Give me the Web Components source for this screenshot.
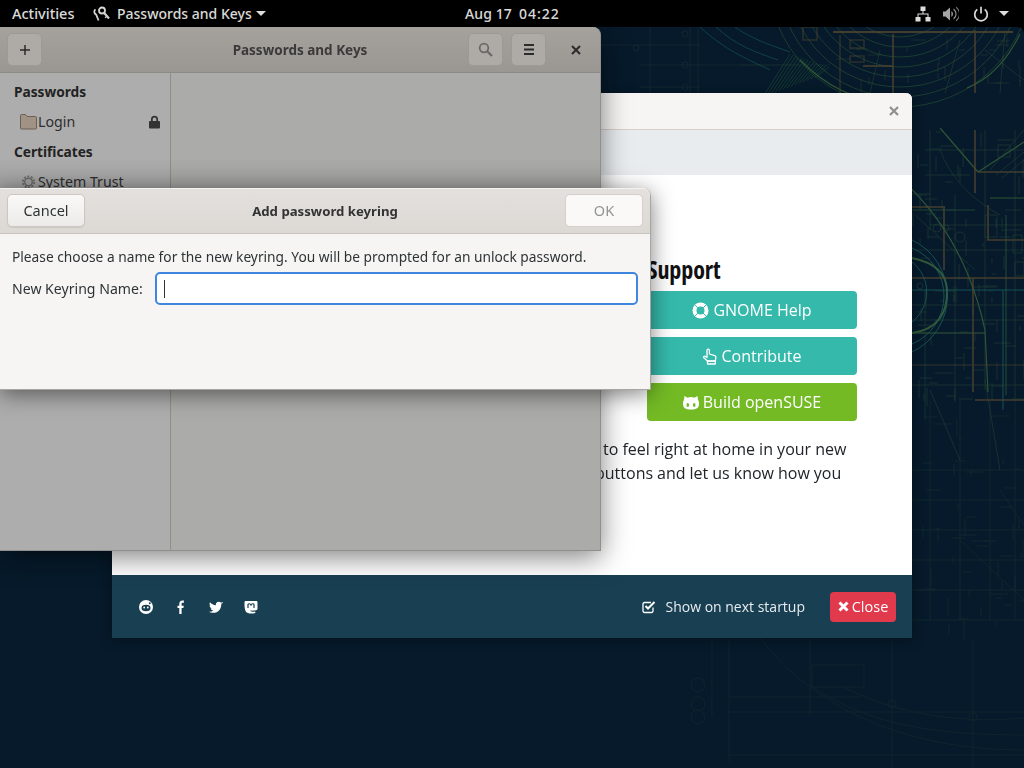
<!DOCTYPE html>
<html lang="en"><head><meta charset="utf-8"><title>Passwords and Keys</title>
<style>html,body{margin:0;padding:0;width:1024px;height:768px;overflow:hidden;background:#061a2b}</style></head>
<body>
<gnome-desktop>
  <blueprint-bg></blueprint-bg>
  <top-bar></top-bar>
  <welcome-window></welcome-window>
  <keys-window></keys-window>
  <keyring-dialog></keyring-dialog>
</gnome-desktop>
<script>
const GF='"Noto Sans","Open Sans",sans-serif', OS='"Open Sans","Noto Sans",sans-serif';
function def(name,css,html){
  customElements.define(name,class extends HTMLElement{
    constructor(){super();const r=this.attachShadow({mode:'open'});r.innerHTML='<style>'+css+'</style>'+html;}
  });
}
/* fine drafting detail for the wallpaper, from a fixed seed */
let seed=17;const rnd=()=>(seed=(seed*16807)%2147483647)/2147483647;
function detail(x0,y0,x1,y1,n,len){let d='';for(let i=0;i<n;i++){const x=Math.round(x0+rnd()*(x1-x0)),y=Math.round(y0+rnd()*(y1-y0)),l=Math.round(4+rnd()*len);d+=rnd()>.5?`M${x} ${y}h${l}`:`M${x} ${y}v${l}`;}return d;}
let arcs='';for(let r=62;r<=132;r+=10)arcs+=`<circle cx="900" cy="-25" r="${r}"/>`;
let hatch='';for(let i=0;i<14;i++)hatch+=`M${763+i*4} ${97-i*1.5}L${790+i*3} ${54+i*1}`;

def('gnome-desktop',`:host{display:block;position:relative;width:1024px;height:768px;overflow:hidden;background:#061a2b}`,`<slot></slot>`);

def('blueprint-bg',`:host{display:block;position:absolute;inset:27px 0 0 0}svg{display:block;filter:blur(.6px)}`,
`<svg width="1024" height="741" viewBox="0 27 1024 741" fill="none">
 <g stroke="#2f5c35" stroke-width=".9" opacity=".6">${arcs}</g>
 <g stroke="#2f6a3a" stroke-width=".7" opacity=".55"><path d="${hatch}"/></g>
 <g stroke="#14544f" stroke-width="1" opacity=".7"><path d="M700 27 C725 50 745 58 770 70M716 27 C735 45 755 52 778 60M735 27 C750 38 770 45 790 52"/></g>
 <g stroke="#3d6a3a" stroke-width="1.200" opacity=".75">
  <path d="M940 128 L978 172"/>
  <path d="M870 155 Q960 215 985 330 L988 392"/>
  <path d="M1020 34 Q1000 75 967 88 "/>
  <path d="M800 60 Q850 110 905 98"/>
  <path d="M978 172 L1024 142"/>
  <path d="M1006 215 V395" opacity=".7"/>
  <path d="M912 210 H975" opacity=".7"/>
  <path d="M990 198 H1024"/>
 </g>
 <g stroke="#4a7a3e" stroke-width="2" opacity=".65"><path d="M912 333 Q948 328 947 290 Q946 265 912 258"/><path d="M912 333 H985" stroke-width="1.200"/></g>
 <g stroke="#1f6a68" stroke-width="1" opacity=".7">
  <path d="M912 352 A62 62 0 0 0 912 240"/><path d="M912 344 A52 52 0 0 0 912 248"/><path d="M912 322 A38 38 0 0 0 912 262"/>
  <path d="M912 290 H1024"/><path d="M1003 290 V410"/>
 </g>
 <g stroke="#5a4a30" stroke-width="1.600" opacity=".75">
  <path d="M975 130 V193"/><path d="M978 172 H1024"/><path d="M912 207 H945"/><path d="M944 207 V270"/>
  <path d="M912 278 H1024"/><path d="M973 278 V392"/><path d="M893 34 V93"/><path d="M975 30 V93"/>
  <path d="M833 32 H1013" stroke-width="2"/><path d="M863 66 H893"/><path d="M840 35 V93" opacity=".6"/><path d="M988 205 V240 H1024"/>
  <path d="M1024 400 H975"/><path d="M912 365 H1024" opacity=".5"/>
  <path d="M803 27 h14 v13 h-14z M850 40 h14 v8 h-14z M850 56 h14 v6 h-14z" opacity=".6"/>
 </g>
 <g stroke="#2d4a3c" stroke-width=".7" opacity=".7">
  <path d="M925 150 H1024M925 175 H970M930 225 H1024M912 250 H1024M912 305 H1024M912 320 H1024M912 385 H1024"/>
  <path d="M930 130 V230M955 195 V400M985 130 V390M1015 130 V400M925 290 V420"/>
  <path d="M990 170 L1024 130M996 175 L1024 152M1002 178 L1024 160M940 150 Q955 190 1000 215"/>
  <path d="M915 215 L975 270M930 390 L960 460M985 380 L1000 470"/>
  <rect x="998" y="145" width="12" height="12"/><rect x="985" y="215" width="12" height="22"/><rect x="1013" y="235" width="9" height="18"/><rect x="1015" y="262" width="9" height="14"/>
  <circle cx="937" cy="228" r="4"/><circle cx="946" cy="228" r="3"/><circle cx="960" cy="237" r="5"/><circle cx="920" cy="286" r="3"/>
  <path d="M1005 30 L1000 93M985 50 L1024 80M960 40 L945 93M880 50 L870 93"/>
  <path d="${detail(912,130,1024,400,90,16)}"/>
 </g>
 <path d="${detail(830,34,1024,93,30,12)}" stroke="#3a5a3a" stroke-width=".6" opacity=".55"/>
 <g stroke="#3b5a3a" stroke-width=".8" opacity=".25">
  <path d="M912 470 H1024M912 500 H1024M912 530 H1024M912 560 H1024M912 590 H1024M912 620 H1024"/>
  <path d="M930 400 V620M960 400 V620M990 400 V620M1015 400 V620"/>
  <path d="M1000 490 L1024 525M960 540 L1024 600"/>
  <path d="${detail(912,400,1024,630,50,16)}"/>
 </g>
 <g stroke="#3b4a3a" stroke-width="1" opacity=".2">
  <path d="M712 639 V716"/><path d="M729 640 V762"/><path d="M729 712 H1024"/><path d="M729 697 H860"/><path d="M729 755 H1024"/><path d="M810 640 V716"/><path d="M892 640 V768"/><path d="M973 640 V768"/>
  <path d="M760 638 C800 690 880 750 1024 750"/><path d="M810 685 C860 720 920 735 1024 735"/><path d="M845 688 C890 710 950 725 1024 718"/>
  <circle cx="698" cy="685" r="7"/><circle cx="698" cy="704" r="7"/><circle cx="698" cy="717" r="7"/>
  <rect x="812" y="665" width="52" height="22"/><circle cx="892" cy="704" r="4"/><circle cx="973" cy="717" r="4"/>
 </g>
 <g stroke="#3b5a3a" stroke-width=".7" opacity=".3">
  <path d="M640 65 H800M640 87 H700M740 65 H830M600 45 H700"/><path d="M690 27 V93M698 27 V93M650 27 V93"/>
  <circle cx="685" cy="34" r="3"/><circle cx="685" cy="65" r="3"/><circle cx="685" cy="87" r="3"/><circle cx="636" cy="48" r="3"/>
 </g>
</svg>`);

def('top-bar',`:host{display:flex;align-items:center;position:absolute;left:0;top:0;width:1024px;height:27px;background:#000;color:#e4e4e2;font:500 14px ${GF};box-sizing:border-box;padding:0 15px 0 12px}
 :host::before,:host::after{content:"";position:absolute;top:27px;width:6px;height:6px;background:radial-gradient(circle at 100% 100%,transparent 5.500px,#000 6px)}
 :host::before{left:0}
 :host::after{right:0;transform:scaleX(-1)}
 .act{width:81px;font-size:14.500px;margin-bottom:2px}.app{display:flex;align-items:center;gap:6px;width:298px}
 .clock{margin-left:74px;display:flex;gap:7px;white-space:pre;letter-spacing:.1px}
 .time{letter-spacing:1px}
 .tray{margin-left:auto;display:flex;align-items:center;gap:12px}
 svg{display:block}`,
`<span class="act">Activities</span>
 <span class="app"><svg width="17" height="16" viewBox="0 0 17 16" fill="none" stroke="#dededc" style="margin-right:1px"><path d="M2.500 3.400A3 3 0 0 0 3.200 8.600L5.600 14.500" stroke-width="1.800"/><circle cx="9" cy="4.500" r="3" stroke-width="1.800"/><path d="M11 6.800L16 12.500" stroke-width="2.200"/><path d="M13.500 10.500l-1.500 1.300" stroke-width="1.400"/></svg>Passwords and Keys<svg width="10" height="5" viewBox="0 0 10 5" fill="#e4e4e2" style="margin-left:-2px"><path d="M0 0h10L5 5z"/></svg></span>
 <span class="clock"><span>Aug 17</span><span class="time">04:22</span></span>
 <span class="tray">
  <svg width="16" height="16" viewBox="0 0 16 16" fill="#dcdcda"><path d="M5.500 0.500h5v4.500h-5zM.5 11h5v4.500h-5zM10.500 11h5v4.500h-5z"/><path d="M7.500 5h1v2.500h5V11h-1V8.500h-9V11h-1V7.500h5z"/></svg>
  <svg width="16" height="16" viewBox="0 0 16 16" fill="#dcdcda"><path d="M0 5.500h2.500L7 1.500v13l-4.500-4H0z" opacity=".75"/><path d="M8.500 5a4 4 0 0 1 0 6z" opacity=".85"/><path d="M10.500 2.500a6.500 6.500 0 0 1 0 11V12a5 5 0 0 0 0-8z" opacity=".7"/><path d="M13 .5a9 9 0 0 1 0 15V14a7.500 7.500 0 0 0 0-12z" opacity=".55"/></svg>
  <span style="display:flex;align-items:center;gap:10px;margin-left:2px"><svg width="16" height="16" viewBox="0 0 16 16" fill="none" stroke="#dcdcda" stroke-width="1.700"><path d="M4.300 3.400a6.300 6.300 0 1 0 7.400 0"/><path d="M8 .8V7.500"/></svg>
  <svg width="10" height="5" viewBox="0 0 10 5" fill="#dcdcda"><path d="M0 0h10L5 5z"/></svg></span>
 </span>`);

def('g-button',`:host{display:inline-flex;align-items:center;justify-content:center;box-sizing:border-box;height:33px;border:1px solid #cdc7c2;border-radius:5px;background:linear-gradient(#faf9f8,#edebe9);color:#2e3436;font:14.500px ${GF};box-shadow:0 1px 1px rgba(0,0,0,.08);padding-bottom:var(--pb,2px)}
 :host([dim]){background:#aeaaa6;border-color:#9d9995;box-shadow:none;color:#333;padding-bottom:0}
 :host([off]){background:#faf9f8;border-color:#d5d0cc;color:#929595;box-shadow:none}`,`<slot></slot>`);

def('link-btn',`:host{display:flex;align-items:center;justify-content:center;gap:var(--g,4px);height:38px;border-radius:4px;background:var(--c,#35b9ab);color:#fff;font:16px ${OS}}
 ::slotted(svg){display:block}`,`<slot></slot>`);

def('welcome-window',`:host{display:flex;flex-direction:column;position:absolute;left:112px;top:93px;width:800px;height:545px;box-shadow:0 2px 12px rgba(0,0,0,.35);border-radius:6px 6px 0 0;overflow:hidden;background:#fff;color:#212529;font:16px ${OS}}
 .tb{height:36px;background:#f6f5f4;border-bottom:1px solid #d5d0cc;display:flex;align-items:center;justify-content:flex-end;padding-right:12px;flex:none}
 .tb svg{display:block}
 .nav{height:45px;background:#e9ecef;flex:none}
 .main{flex:1;padding:79px 55px 0 535px;background:#fff;min-height:0}
 h2{margin:0 0 6px;font:700 24px/31px ${OS};font-stretch:75%;color:#111;letter-spacing:-.1px;height:31px}
 .col{display:flex;flex-direction:column;gap:8px}
 .txt{margin:16px 0 0 -44px;line-height:24px;white-space:nowrap;color:#212529}
 .txt div+div{margin-left:-8px;word-spacing:-.15px}
 .foot{height:63px;background:#193f52;flex:none;display:flex;align-items:center;padding:0 16px 0 27px;color:#e6ecef;font:14px ${OS}}
 .soc{display:flex;gap:21px;align-items:center}.soc svg{display:block}
 .chk{margin-left:auto;display:flex;align-items:center;gap:8px}
 .close{margin-left:25px;width:66px;height:30px;border-radius:4px;background:#e03a4c;color:#fff;display:flex;align-items:center;justify-content:center;gap:3px;font-size:14.500px}`,
`<div class="tb"><svg width="12" height="12" viewBox="0 0 12 12" stroke="#8f8f8f" stroke-width="2.200"><path d="M2 2l8 8M10 2l-8 8"/></svg></div>
 <div class="nav"></div>
 <div class="main">
  <h2>Support</h2>
  <div class="col">
   <link-btn><svg width="17" height="17" viewBox="0 0 17 17"><circle cx="8.500" cy="8.500" r="6" fill="none" stroke="#fff" stroke-width="4"/><path d="M3.200 3.200l2.600 2.600M13.800 3.200l-2.600 2.600M3.200 13.800l2.600-2.600M13.800 13.800l-2.600-2.600" stroke="#35b9ab" stroke-width="1"/></svg>GNOME Help</link-btn>
   <link-btn style="--g:3px"><svg width="16" height="17" viewBox="0 0 16 17" fill="none" stroke="#fff" stroke-width="1.300" stroke-linejoin="round"><path d="M5 9.500V2.300a1.200 1.200 0 0 1 2.400 0V6l5.300 1.600c.9.300 1.300 1 1.200 1.900l-.6 3.500H5.500L1.800 9.800c-.8-1 .6-2.300 1.600-1.400z"/><path d="M5.500 13.200h7.800v2.800H5.500z"/></svg>Contribute</link-btn>
   <link-btn style="--c:#73ba25"><svg width="16" height="15" viewBox="0 0 16 15" fill="#fff"><path d="M1.500 1l3 1.700a10 10 0 0 1 7 0L14.500 1l.5 4c.9 1 1 2.300 1 4 0 4-2.500 5.500-8 5.500S0 13 0 9c0-1.700.1-3 1-4z"/><ellipse cx="4.800" cy="10" rx="1.300" ry="1.900" fill="#73ba25"/><ellipse cx="11.200" cy="10" rx="1.300" ry="1.900" fill="#73ba25"/></svg>Build openSUSE</link-btn>
  </div>
  <div class="txt"><div>to feel right at home in your new</div><div>buttons and let us know how you</div></div>
 </div>
 <div class="foot">
  <div class="soc">
   <svg width="14" height="14" viewBox="0 0 14 14"><circle cx="7" cy="7" r="7" fill="#fff"/><ellipse cx="7" cy="8" rx="4.500" ry="3.200" fill="#193f52"/><circle cx="5.200" cy="7.500" r=".9" fill="#fff"/><circle cx="8.800" cy="7.500" r=".9" fill="#fff"/><circle cx="10.800" cy="3.200" r="1" fill="#193f52"/></svg>
   <svg width="14" height="14" viewBox="0 0 14 14" fill="#fff"><path d="M5.300 14V8H3.500V5.700h1.800V4c0-2.200 1.200-3.400 3-3.400.9 0 1.600.1 1.600.1v2H8.900c-1 0-1.300.6-1.300 1.200v1.800h2.200L9.400 8H7.600v6z"/></svg>
   <svg width="14" height="14" viewBox="0 0 14 14" fill="#fff"><path d="M14 3c-.5.2-1 .4-1.600.5.600-.4 1-.9 1.200-1.600-.5.300-1.100.6-1.800.7a2.900 2.900 0 0 0-4.900 2.600C4.500 5 2.400 3.900 1 2.200.2 3.500.6 5.200 1.900 6c-.5 0-.9-.1-1.300-.4 0 1.400 1 2.600 2.300 2.900-.4.100-.9.100-1.300 0 .4 1.200 1.500 2 2.700 2-1.200 1-2.700 1.400-4.300 1.200 4 2.500 12.400 1.300 12.400-8.300.7-.1 1.200-.7 1.600-1.400z"/></svg>
   <svg width="14" height="14" viewBox="0 0 14 14"><path d="M1.700 1h10.600c.7 0 1.200.6 1.200 1.300v6.200c0 .9-.6 1.600-1.500 1.800-2 .4-4 .5-5.700.3.100.8.900 1.200 2 1.200 1 0 2-.1 3-.4v1.500c-3.200 1.200-8 .9-9.500-1.300C.9 9.600.5 7 .5 4.500V2.300C.5 1.600 1 1 1.700 1z" fill="#fff"/><path d="M4 8V4.800c0-1.400 2.300-1.400 3 .2.700-1.600 3-1.600 3-.2V8" fill="none" stroke="#193f52" stroke-width="1.200"/></svg>
  </div>
  <div class="chk"><svg width="15" height="14" viewBox="0 0 15 14" fill="none" stroke="#fff"><path d="M11 7.500V11a1.500 1.500 0 0 1-1.500 1.500h-7A1.500 1.500 0 0 1 1 11V4a1.500 1.500 0 0 1 1.500-1.500H9" stroke-width="1.300"/><path d="M3.500 6l2.500 2.500L12.500 2" stroke-width="2"/></svg>Show on next startup</div>
  <div class="close"><svg width="11" height="11" viewBox="0 0 11 11" stroke="#fff" stroke-width="3"><path d="M1.500 1.500l8 8M9.500 1.500l-8 8"/></svg>Close</div>
 </div>`);

def('keys-window',`:host{display:flex;flex-direction:column;position:absolute;left:0;top:27px;width:601px;height:524px;box-sizing:border-box;border-right:1px solid #8f8f8d;border-bottom:1px solid #8f8f8d;border-radius:0 8px 0 0;box-shadow:0 6px 28px rgba(0,0,0,.5);background:#acacaa;color:#2b2b2b;font:14px ${GF}}
 .hd{height:46px;flex:none;box-sizing:border-box;border-bottom:1px solid #8d8984;border-radius:0 8px 0 0;background:linear-gradient(#a5a19d,#9a9691);display:grid;grid-template-columns:1fr auto 1fr;align-items:center;padding:0 7px}
 .l{display:flex}.r{display:flex;justify-content:flex-end;align-items:center;gap:8px}
 .hd g-button{width:35px;height:33px}
 .title{text-align:center;font-weight:700;font-size:13.500px;color:#3a3a3a}
 .x{width:40px;display:flex;justify-content:center;padding-left:6px;margin-left:-1px;box-sizing:border-box}
 svg{display:block}
 .bd{flex:1;display:flex;min-height:0;position:relative}
 .side{width:171px;box-sizing:border-box;border-right:1px solid #8f8f8d;background:#adadad;padding:8px 0 0 0}
 .sec{font-weight:700;font-size:13.700px;height:30px;line-height:20px;padding:1px 0 0 14px;box-sizing:border-box;color:#222}
 .row{height:30px;display:flex;align-items:flex-start;padding:1px 9px 0 20px;box-sizing:border-box;gap:1px;color:#2e2e2e;font-size:14.200px}
 .row svg:first-child{margin-top:2px}
 .lock{margin-left:auto;margin-top:3px}
 .main{flex:1;background:#ababa9}
 .sh{position:absolute;left:0;right:0;top:85px;height:30px;background:linear-gradient(rgba(0,0,0,0),rgba(0,0,0,.1))}`,
`<div class="hd">
  <div class="l"><g-button dim><svg width="10" height="10" viewBox="0 0 10 10" stroke="#2b2b2b" stroke-width="1.500"><path d="M5 0v10M0 5h10"/></svg></g-button></div>
  <span class="title">Passwords and Keys</span>
  <div class="r"><g-button dim><svg width="15" height="15" viewBox="0 0 15 15" fill="none" stroke="#6a6a68" stroke-width="1.800"><circle cx="6" cy="6" r="4.300"/><path d="M9.200 9.200L14 14" stroke-width="2.200"/></svg></g-button>
  <g-button dim><svg width="12" height="11" viewBox="0 0 12 11" fill="#2b2b2b"><path d="M1 0h10v2H1zM1 4.500h10v2H1zM1 9h10v2H1z"/></svg></g-button>
  <span class="x"><svg width="10" height="10" viewBox="0 0 10 10" stroke="#2b2b2b" stroke-width="2"><path d="M1 1l8 8M9 1l-8 8"/></svg></span></div>
 </div>
 <div class="bd">
  <div class="side">
   <div class="sec">Passwords</div>
   <div class="row"><svg width="17" height="16" viewBox="0 0 17 16"><path d="M.5 1.500A1 1 0 0 1 1.500.5h4l1.500 2h8.500a1 1 0 0 1 1 1V14a1 1 0 0 1-1 1h-14a1 1 0 0 1-1-1z" fill="#a09284" stroke="#6c5f55"/></svg>Login
     <svg class="lock" width="13" height="14" viewBox="0 0 13 14" fill="#333"><path d="M3 6V4.200a3.500 3.500 0 0 1 7 0V6h-1.700V4.200a1.800 1.800 0 0 0-3.600 0V6z"/><rect x="1" y="6" width="11" height="7.500" rx="1"/></svg></div>
   <div class="sec">Certificates</div>
   <div class="row"><svg width="17" height="16" viewBox="0 0 17 16" fill="none" stroke="#6f6f6d"><circle cx="8.500" cy="8" r="3.800" stroke-width="1.400"/><circle cx="8.500" cy="8" r="5.600" stroke-width="1.800" stroke-dasharray="2 1.500"/></svg>System Trust</div>
  </div>
  <div class="main"></div>
  <div class="sh"></div>
 </div>`);

def('keyring-dialog',`:host{display:flex;flex-direction:column;position:absolute;left:0;top:188px;width:651px;height:202px;box-sizing:border-box;border-right:1px solid #a8a6a3;border-bottom:1px solid #a8a6a3;border-radius:0 8px 0 0;background:#f6f5f4;box-shadow:0 4px 22px rgba(0,0,0,.5);color:#2e3436;font:13.750px ${GF}}
 .hd{height:46px;flex:none;box-sizing:border-box;border-bottom:1px solid #c9c4bf;border-radius:0 8px 0 0;background:linear-gradient(#e3e0dd,#dcd9d5);box-shadow:inset 0 1px 0 #f4f3f1;display:flex;align-items:center;padding:0 7px;justify-content:space-between}
 .title{font-weight:700;font-size:13.200px;color:#333}
 g-button{width:78px}
 .bd{padding:13px 12px 0 12px;display:flex;flex-direction:column;gap:5px}
 .msg{line-height:20px;height:20px;white-space:nowrap}
 .f{display:flex;align-items:center;gap:12px}
 .lbl{font-size:14.100px}
 .in{flex:1;height:33px;box-sizing:border-box;border:2px solid #3f86df;border-radius:5px;background:#fff;display:flex;align-items:center;padding-left:7px}
 .caret{width:1px;height:18px;background:#2e3436}`,
`<div class="hd"><g-button>Cancel</g-button><span class="title">Add password keyring</span><g-button off>OK</g-button></div>
 <div class="bd"><div class="msg">Please choose a name for the new keyring. You will be prompted for an unlock password.</div>
 <div class="f"><span class="lbl">New Keyring Name:</span><div class="in"><span class="caret"></span></div></div></div>`);
</script>
</body></html>
